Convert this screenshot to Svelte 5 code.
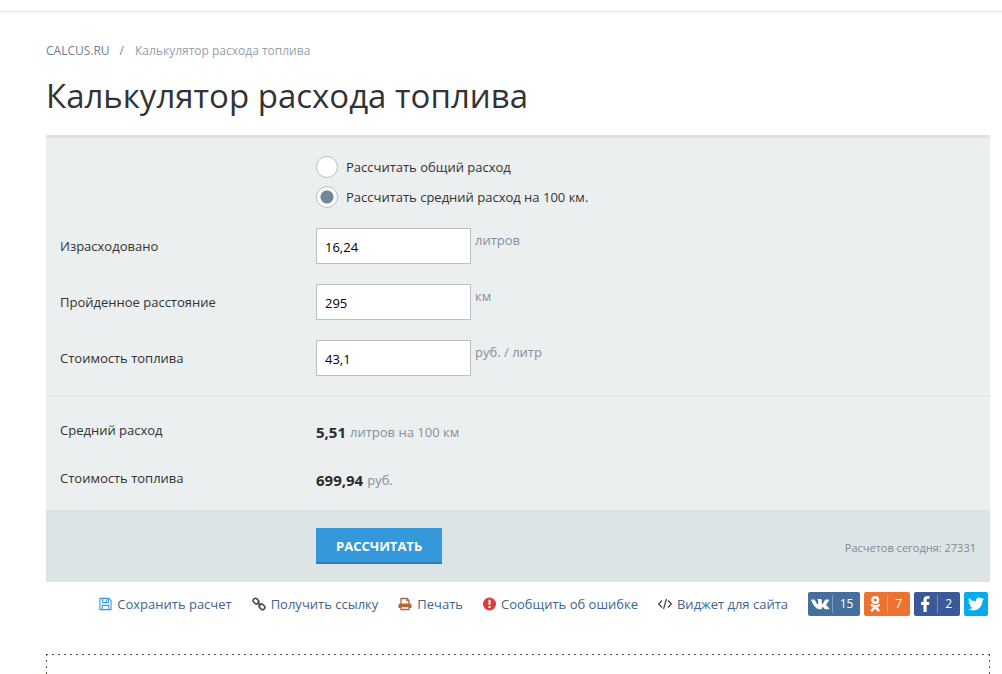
<script>
  let mode = $state('average');
  let result = $state({ average: 5.505, cost: 699.944 });

  let fields = $state([
    { id: 'spent', label: 'Израсходовано', value: '16,24', unit: 'литров' },
    { id: 'distance', label: 'Пройденное расстояние', value: '295', unit: 'км' },
    { id: 'price', label: 'Стоимость топлива', value: '43,1', unit: 'руб. / литр' },
  ]);

  const modes = [
    { value: 'total', label: 'Рассчитать общий расход' },
    { value: 'average', label: 'Рассчитать средний расход на 100 км.' },
  ];

  const tools = [
    { icon: 'save', label: 'Сохранить расчет' },
    { icon: 'link', label: 'Получить ссылку' },
    { icon: 'print', label: 'Печать' },
    { icon: 'error', label: 'Сообщить об ошибке' },
    { icon: 'code', label: 'Виджет для сайта' },
  ];

  function toNumber(text) {
    return parseFloat(text.replace(',', '.')) || 0;
  }

  function format(number) {
    return (Math.round(number * 100 + 0.0001) / 100).toFixed(2).replace('.', ',');
  }

  function calculate(e) {
    e.preventDefault();
    const [spent, distance, price] = fields.map((field) => toNumber(field.value));
    result = {
      average: distance ? (spent / distance) * 100 : 0,
      cost: spent * price,
    };
  }
</script>

<div class="page">
  <nav class="breadcrumbs">
    <a href="#home">CALCUS.RU</a>
    <span class="slash">/</span>
    <span>Калькулятор расхода топлива</span>
  </nav>

  <h1>Калькулятор расхода топлива</h1>

  <form class="calc" onsubmit={calculate}>
    <div class="inputs">
      <div class="modes">
        {#each modes as item}
          <label class="mode">
            <input type="radio" name="mode" value={item.value} bind:group={mode} />
            {item.label}
          </label>
        {/each}
      </div>
      {#each fields as field}
        <div class="row">
          <label for={field.id}>{field.label}</label>
          <div class="field">
            <input id={field.id} type="text" bind:value={field.value} />
            <span class="unit">{field.unit}</span>
          </div>
        </div>
      {/each}
    </div>

    <div class="results">
      <div class="row">
        <span>Средний расход</span>
        <div class="value">
          <strong>{format(result.average)}</strong>
          <span>литров на 100 км</span>
        </div>
      </div>
      <div class="row">
        <span>Стоимость топлива</span>
        <div class="value">
          <strong>{format(result.cost)}</strong>
          <span>руб.</span>
        </div>
      </div>
    </div>

    <div class="footer">
      <button type="submit">РАССЧИТАТЬ</button>
      <span class="counter">Расчетов сегодня: 27331</span>
    </div>
  </form>

  <div class="toolbar">
    {#each tools as tool}
      <a class="tool" href="#{tool.icon}">
        <svg class={tool.icon} viewBox="0 0 14 14" fill="none" stroke="currentColor">
          {#if tool.icon === 'save'}
            <path d="M1 1h9.5l2.5 2.5V13H1zM4 1v4.5h6V1M3.5 13V8.5h7V13M8 2v2.5" stroke-width="1.2" />
          {:else if tool.icon === 'link'}
            <g stroke-width="1.6">
              <rect x="1" y="2" width="6" height="4.4" rx="2" transform="rotate(45 4 4.2)" />
              <rect x="7" y="7.6" width="6" height="4.4" rx="2" transform="rotate(45 10 9.8)" />
              <path d="M5.2 5.2l3.6 3.6" />
            </g>
          {:else if tool.icon === 'print'}
            <path d="M3 7V1.5h6l2 2V7M9 1.5v2h2" stroke-width="1.3" />
            <path d="M0.5 11V8.2Q0.5 6.5 2 6.5h10q1.5 0 1.5 1.7V11H11V9.5H3V11z" fill="currentColor" stroke="none" />
            <path d="M3 9.5v3h8v-3z" stroke-width="1.3" />
          {:else if tool.icon === 'error'}
            <circle cx="7" cy="7" r="7" fill="currentColor" stroke="none" />
            <path d="M7 2.5v5.2M7 9.2v2.2" stroke="#fff" stroke-width="2.2" />
          {:else}
            <path d="M4 3.5L0.7 7 4 10.5M10 3.5L13.3 7 10 10.5M8.5 2l-3 10" stroke-width="1.3" />
          {/if}
        </svg>
        {tool.label}
      </a>
    {/each}

    <div class="share">
      <a class="vk" href="#vk" aria-label="ВКонтакте">
        <svg viewBox="1 3 22 18" fill="#fff">
          <path d="M21.547 7h-3.29a.743.743 0 0 0-.655.392s-1.312 2.416-1.734 3.23C14.734 12.813 14 12.126 14 11.11V7.603A1.104 1.104 0 0 0 12.896 6.5h-2.474a1.982 1.982 0 0 0-1.75.813s1.255-.204 1.255 1.49c0 .42.022 1.626.04 2.64a.73.73 0 0 1-1.272.503 21.54 21.54 0 0 1-2.498-4.543.693.693 0 0 0-.63-.403h-2.99a.508.508 0 0 0-.48.685C3.005 10.175 6.918 18 11.38 18h1.878a.742.742 0 0 0 .742-.742v-1.135a.73.73 0 0 1 1.23-.53l2.247 2.112a1.09 1.09 0 0 0 .746.295h2.953c1.424 0 1.424-.988.647-1.753-.546-.538-2.518-2.617-2.518-2.617a1.02 1.02 0 0 1-.078-1.323c.637-.84 1.68-2.212 2.122-2.8.603-.804 1.697-2.507.197-2.507z" />
        </svg>
        <span>15</span>
      </a>
      <a class="ok" href="#ok" aria-label="Одноклассники">
        <svg viewBox="0 0 16 16" fill="none" stroke="#fff" stroke-width="2.4" stroke-linecap="round">
          <circle cx="8" cy="4" r="2.8" />
          <path d="M4.5 9.2Q8 11.3 11.5 9.2M8 10.7l-3.2 3.7M8 10.7l3.2 3.7" />
        </svg>
        <span>7</span>
      </a>
      <a class="fb" href="#fb" aria-label="Facebook">
        <svg viewBox="0 0 320 512" fill="#fff">
          <path d="M279.14 288l14.22-92.66h-88.91v-60.13c0-25.35 12.42-50.06 52.24-50.06h40.42V6.26S260.43 0 225.36 0c-73.22 0-121.08 44.38-121.08 124.72v70.62H22.89V288h81.39v224h100.17V288z" />
        </svg>
        <span>2</span>
      </a>
      <a class="tw" href="#tw" aria-label="Twitter">
        <svg viewBox="0 0 24 24" fill="#fff">
          <path d="M23.953 4.57a10 10 0 01-2.825.775 4.958 4.958 0 002.163-2.723c-.951.555-2.005.959-3.127 1.184a4.92 4.92 0 00-8.384 4.482C7.69 8.095 4.067 6.13 1.64 3.162a4.822 4.822 0 00-.666 2.475c0 1.71.87 3.213 2.188 4.096a4.904 4.904 0 01-2.228-.616v.06a4.923 4.923 0 003.946 4.827 4.996 4.996 0 01-2.212.085 4.936 4.936 0 004.604 3.417 9.867 9.867 0 01-6.102 2.105c-.39 0-.779-.023-1.17-.067a13.995 13.995 0 007.557 2.209c9.053 0 13.998-7.496 13.998-13.985 0-.21 0-.42-.015-.63A9.935 9.935 0 0024 4.59z" />
        </svg>
      </a>
    </div>
  </div>

  <div class="notice"></div>
</div>

<style>
  :global(body) {
    background: #fff;
  }

  .page {
    margin-top: 11px;
    border-top: 1px solid #e3e5e6;
    padding: 28px 12px 0 46px;
    font-family: 'Open Sans', 'Noto Sans', sans-serif;
    font-size: 13px;
    line-height: 24px;
    color: #333;
  }

  a {
    text-decoration: none;
  }

  .breadcrumbs {
    display: flex;
    line-height: 22px;
    font-size: 12px;
    color: #95a0a8;
  }

  .breadcrumbs a {
    color: #6f8191;
  }

  .slash {
    margin: 0 11px 0 10px;
    color: #7b8287;
  }

  h1 {
    margin: 10px 0 15px;
    font-size: 33px;
    font-weight: 400;
    line-height: 48px;
    color: #333;
  }

  .calc {
    border-top: 3px solid #dce4e5;
    background: #ebefef;
  }

  .inputs {
    display: flex;
    flex-direction: column;
    gap: 20px;
    padding: 18px 14px 20px;
    border-bottom: 1px solid #dce2e4;
  }

  .modes {
    display: flex;
    flex-direction: column;
    align-items: flex-start;
    gap: 8px;
    margin-left: 256px;
  }

  .mode {
    display: flex;
    align-items: center;
    gap: 8px;
    height: 22px;
  }

  input {
    box-sizing: border-box;
    margin: 0;
    border: 1px solid #b8c1c7;
    background: #fff;
  }

  input[type='radio'] {
    appearance: none;
    width: 22px;
    height: 22px;
    border-radius: 50%;
  }

  input[type='radio']:checked {
    background: radial-gradient(circle, #708597 6px, #fff 7px);
  }

  input[type='text'] {
    width: 155px;
    height: 36px;
    padding: 2px 8px 0;
    border-radius: 0;
    font-family: inherit;
    font-size: 13px;
    color: #000;
  }

  .row {
    display: grid;
    grid-template-columns: 256px 1fr;
  }

  .inputs .row {
    line-height: 36px;
  }

  .field {
    display: flex;
    align-items: flex-start;
    gap: 4px;
  }

  .unit {
    line-height: 24px;
    color: #8091a2;
  }

  .results {
    display: flex;
    flex-direction: column;
    gap: 20px;
    padding: 20px 14px 16px;
    border-top: 1px solid #f5f8f8;
  }

  .value {
    display: flex;
    align-items: center;
    gap: 4px;
    height: 28px;
    color: #8091a2;
  }

  .value strong {
    font-size: 15px;
    color: #2b2d2f;
  }

  .footer {
    display: flex;
    align-items: center;
    justify-content: space-between;
    height: 72px;
    padding: 0 14px 0 270px;
    background: #dce4e5;
  }

  button {
    height: 36px;
    padding: 2px 20px 0;
    border: 0;
    border-bottom: 2px solid #2a7fc0;
    background: #3498db;
    font-family: inherit;
    font-size: 13px;
    font-weight: 700;
    color: #fff;
    cursor: pointer;
  }

  .counter {
    padding-top: 4px;
    font-size: 11px;
    color: #7c8c99;
  }

  .toolbar {
    display: flex;
    align-items: center;
    justify-content: flex-end;
    gap: 20px;
    padding: 9px 2px 0 0;
  }

  .tool {
    display: flex;
    align-items: center;
    gap: 5px;
    line-height: 26px;
    color: #42648b;
    white-space: nowrap;
  }

  .tool svg {
    width: 14px;
    height: 14px;
  }

  .tool .save,
  .tool .error {
    width: 13px;
  }

  .save {
    color: #3a9bdc;
  }

  .link,
  .code {
    color: #4a4a4a;
  }

  .print {
    color: #b0693c;
  }

  .error {
    color: #e03b3b;
  }

  .share {
    display: flex;
    gap: 4px;
  }

  .share a {
    display: flex;
    align-items: center;
    justify-content: center;
    box-sizing: border-box;
    width: 46px;
    height: 24px;
    border-radius: 2px;
    font-size: 12px;
    color: #fff;
  }

  .share svg {
    flex: 1;
    height: 16px;
  }

  .share span {
    flex: 1;
    margin: 4px 0;
    border-left: 1px solid rgba(255, 255, 255, 0.3);
    line-height: 18px;
    text-align: center;
  }

  .share .vk {
    width: 52px;
    background: #45709d;
  }

  .share .vk span {
    flex: 0 0 27px;
  }

  .share .ok {
    background: #ec7230;
  }

  .share .fb {
    background: #3b5998;
  }

  .share .tw {
    width: 24px;
    background: #00aced;
  }

  /* gradients keep the dash step even on every side */
  .notice {
    height: 20px;
    margin-top: 37px;
    background:
      repeating-linear-gradient(90deg, #55503f 0 2px, transparent 2px 6px) top / 100% 1px no-repeat,
      repeating-linear-gradient(#55503f 0 2px, transparent 2px 6px) left / 1px 100% no-repeat,
      repeating-linear-gradient(#55503f 0 2px, transparent 2px 6px) right / 1px 100% no-repeat;
  }
</style>
